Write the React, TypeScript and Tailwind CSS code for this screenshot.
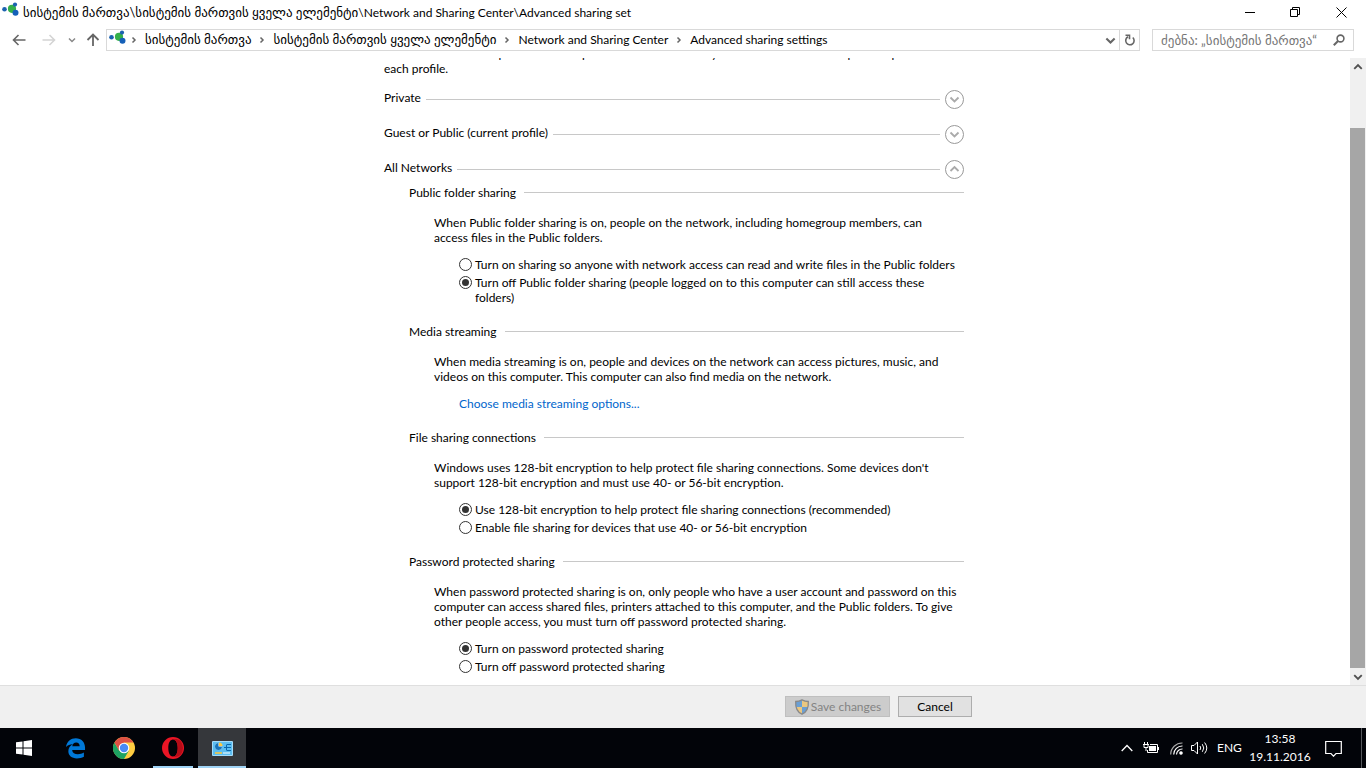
import { useState, type ReactNode } from "react";

const crumbs = [
  { label: "სისტემის მართვა", georgian: true },
  { label: "სისტემის მართვის ყველა ელემენტი", georgian: true },
  { label: "Network and Sharing Center", georgian: false },
  { label: "Advanced sharing settings", georgian: false },
];

function NetworkIcon() {
  return (
    <svg width="17" height="15" viewBox="0 0 17 15" className="shrink-0" aria-hidden="true">
      <circle cx="2.5" cy="7.3" r="2.3" fill="#1c62b0" />
      <circle cx="10" cy="6.8" r="4.1" fill="#35b04a" />
      <circle cx="13" cy="2.6" r="2.1" fill="#1c62b0" />
      <circle cx="13.5" cy="10.7" r="3" fill="#1560b8" />
    </svg>
  );
}

function Chevron({ dir, size = 8, color = "#666" }: { dir: "up" | "down" | "right"; size?: number; color?: string }) {
  const d = { up: "M1 5.5 4 2.5 7 5.5", down: "M1 2.5 4 5.5 7 2.5", right: "M2.5 1.5 5 4 2.5 6.5" }[dir];
  return (
    <svg width={size} height={size} viewBox="0 0 8 8" fill="none" stroke={color} strokeWidth="1.5" aria-hidden="true">
      <path d={d} />
    </svg>
  );
}

function TitleBar() {
  return (
    <header className="flex h-6 shrink-0 items-center pl-[2px]">
      <div className="self-start pt-[2px]">
        <NetworkIcon />
      </div>
      <h1 className="ml-1 flex-1 truncate text-[12px] leading-[15px]">
        <span className="text-[13px]">სისტემის მართვა\სისტემის მართვის ყველა ელემენტი</span>
        \Network and Sharing Center\Advanced sharing set
      </h1>
      <div className="flex h-[20px] shrink-0">
        <button aria-label="Minimize" className="flex w-12 items-center justify-center">
          <svg width="10" height="10" stroke="#000"><path d="M0 5.5h10" /></svg>
        </button>
        <button aria-label="Restore" className="flex w-[42px] items-center justify-center">
          <svg width="11" height="11" fill="none" stroke="#000">
            <path d="M.5 2.5h7v7h-7zM2.5 2.5v-2h7v7h-2" />
          </svg>
        </button>
        <button aria-label="Close" className="flex w-[50px] items-center justify-center">
          <svg width="11" height="11" stroke="#000"><path d="m.5.5 10 10M10.5.5l-10 10" /></svg>
        </button>
      </div>
    </header>
  );
}

function AddressBar() {
  return (
    <nav className="flex h-[34px] shrink-0 items-start pt-[5px] pr-3" aria-label="Address">
      <div className="flex h-[22px] w-[106px] shrink-0 items-center pl-3">
        <button aria-label="Back" className="w-[30px]">
          <svg width="14" height="12" fill="none" stroke="#666" strokeWidth="1.6"><path d="M13.5 6H1.5M6.500 1l-5 5 5 5" /></svg>
        </button>
        <button aria-label="Forward" className="w-[26px]">
          <svg width="14" height="12" fill="none" stroke="#d4d4d4" strokeWidth="1.6"><path d="M.5 6h12M7.500 1l5 5-5 5" /></svg>
        </button>
        <button aria-label="Recent locations" className="flex w-[18px]">
          <Chevron dir="down" color="#888" />
        </button>
        <button aria-label="Up">
          <svg width="14" height="14" fill="none" stroke="#666" strokeWidth="1.8"><path d="M7 13V2M1.500 7 7 1.500 12.500 7" /></svg>
        </button>
      </div>
      <div className="flex h-[22px] min-w-0 flex-1 items-center border border-[#d9d9d9]">
        <div className="ml-[2px] flex h-full w-[14px] shrink-0 items-start">
          <NetworkIcon />
        </div>
        {crumbs.map(({ label, georgian }) => (
          <span key={label} className="flex shrink-0 items-center pb-px">
            <span className="flex w-[22px] justify-center">
              <Chevron dir="right" />
            </span>
            <a href="#" className={`whitespace-nowrap leading-[15px] ${georgian ? "text-[13px]" : "text-[12px]"}`}>
              {label}
            </a>
          </span>
        ))}
        <button aria-label="Previous locations" className="ml-auto flex h-full w-[18px] items-center justify-center">
          <Chevron dir="down" size={11} />
        </button>
        <button aria-label="Refresh" className="flex h-full w-[20px] items-center justify-center border-l border-[#d9d9d9]">
          <svg width="12" height="12" fill="none" stroke="#666" strokeWidth="1.6">
            <path d="M4 2.800A4.200 4.200 0 1 0 8.800 3.500M1.500 1.200h4v4" />
          </svg>
        </button>
      </div>
      <div className="ml-3 flex h-[22px] w-[202px] shrink-0 items-center border border-[#d9d9d9] pr-2 pl-2">
        <input
          type="search"
          aria-label="ძებნა"
          placeholder="ძებნა: „სისტემის მართვა“"
          className="min-w-0 flex-1 text-[13px] leading-[15px] outline-none placeholder:text-[#767676]"
        />
        <svg width="12" height="12" fill="none" stroke="#666" strokeWidth="1.6" aria-hidden="true">
          <circle cx="7.5" cy="4.5" r="3.4" />
          <path d="M5 7 .8 11.200" strokeWidth="2" />
        </svg>
      </div>
    </nav>
  );
}

function ProfileRow({ title, open = false }: { title: string; open?: boolean }) {
  return (
    <div className="flex h-5 items-center">
      <h2 className="pb-1">{title}</h2>
      <div className="ml-[5px] h-px flex-1 bg-[#c8c8c8]" />
      <button aria-label={title} aria-expanded={open} className="ml-1 flex size-5 items-center justify-center">
        <svg width="20" height="20" fill="none" stroke="#999">
          <circle cx="10.5" cy="10.5" r="9" />
          <path d={open ? "m6.500 12 4-4 4 4" : "m6.500 8.500 4 4 4-4"} stroke="#aaa" strokeWidth="1.8" />
        </svg>
      </button>
    </div>
  );
}

function Section({ title, children }: { title: string; children: ReactNode }) {
  return (
    <section className="pl-[25px]">
      <div className="flex items-center">
        <h3>{title}</h3>
        <div className="ml-2 h-px flex-1 bg-[#c8c8c8]" />
      </div>
      <div className="pt-[15px] pl-[25px] whitespace-nowrap">{children}</div>
    </section>
  );
}

function RadioGroup({ name, options, initial }: { name: string; options: ReactNode[]; initial: number }) {
  const [selected, setSelected] = useState(initial);
  return (
    <div className="mt-3 flex flex-col gap-[3px] pl-[25px]">
      {options.map((option, i) => (
        <label key={i} className="flex items-start">
          <input
            type="radio"
            name={name}
            checked={selected === i}
            onChange={() => setSelected(i)}
            className="mt-px mr-[3px] grid size-[13px] shrink-0 appearance-none place-items-center rounded-full border border-[#333] bg-white before:size-[7px] before:rounded-full checked:before:bg-[#333]"
          />
          <span>{option}</span>
        </label>
      ))}
    </div>
  );
}

function Content() {
  return (
    <main className="min-w-0 flex-1 overflow-hidden text-[12px] leading-[15px]">
      {/* scrolled down: the first intro line is almost out of view */}
      <div className="mx-auto -mt-3 w-[582px] pr-[2px]">
        <p className="whitespace-nowrap">
          Windows creates a separate network profile for each network you use. You can choose specific options for
          <br />
          each profile.
        </p>
        <div className="mt-[13px] flex flex-col gap-[15px]">
          <ProfileRow title="Private" />
          <ProfileRow title="Guest or Public (current profile)" />
          <ProfileRow title="All Networks" open />
        </div>
        <div className="mt-[6px] flex flex-col gap-[19px]">
          <Section title="Public folder sharing">
            <p>
              When Public folder sharing is on, people on the network, including homegroup members, can
              <br />
              access files in the Public folders.
            </p>
            <RadioGroup
              name="public-folder"
              initial={1}
              options={[
                "Turn on sharing so anyone with network access can read and write files in the Public folders",
                <>
                  Turn off Public folder sharing (people logged on to this computer can still access these
                  <br />
                  folders)
                </>,
              ]}
            />
          </Section>
          <Section title="Media streaming">
            <p>
              When media streaming is on, people and devices on the network can access pictures, music, and
              <br />
              videos on this computer. This computer can also find media on the network.
            </p>
            <div className="mt-3 pl-[25px]">
              <a href="#" className="text-[#0066cc]">Choose media streaming options...</a>
            </div>
          </Section>
          <Section title="File sharing connections">
            <p>
              Windows uses 128-bit encryption to help protect file sharing connections. Some devices don't
              <br />
              support 128-bit encryption and must use 40- or 56-bit encryption.
            </p>
            <RadioGroup
              name="encryption"
              initial={0}
              options={[
                "Use 128-bit encryption to help protect file sharing connections (recommended)",
                "Enable file sharing for devices that use 40- or 56-bit encryption",
              ]}
            />
          </Section>
          <Section title="Password protected sharing">
            <p>
              When password protected sharing is on, only people who have a user account and password on this
              <br />
              computer can access shared files, printers attached to this computer, and the Public folders. To give
              <br />
              other people access, you must turn off password protected sharing.
            </p>
            <RadioGroup
              name="password"
              initial={0}
              options={["Turn on password protected sharing", "Turn off password protected sharing"]}
            />
          </Section>
        </div>
      </div>
    </main>
  );
}

function Scrollbar() {
  return (
    <div className="flex w-4 shrink-0 flex-col bg-[#f0f0f0]">
      <button aria-label="Scroll up" className="flex h-[17px] items-center justify-center">
        <Chevron dir="up" size={10} color="#505050" />
      </button>
      <div className="mt-[53px] mr-px flex-1 bg-[#a6a6a6]" />
      <button aria-label="Scroll down" className="flex h-[17px] items-center justify-center">
        <Chevron dir="down" size={10} color="#505050" />
      </button>
    </div>
  );
}

function Footer() {
  return (
    <footer className="h-[43px] shrink-0 border-t border-[#dfdfdf] bg-[#f0f0f0] pt-[10px] text-[12px] leading-[15px]">
      <div className="mx-auto flex w-[578px] justify-end gap-2">
        <button disabled className="flex h-[21px] w-[105px] items-center justify-center gap-px border border-[#bfbfbf] bg-[#cccccc] text-[#838383]">
          <svg width="16" height="16" viewBox="0 0 16 16" aria-hidden="true">
            <path d="M8 1v7H2.200C1.800 6 1.800 4 2 2.500 4 2.500 6 2 8 1z" fill="#6a9fd4" />
            <path d="M8 1v7h5.800c.4-2 .4-4 .2-5.500C12 2.500 10 2 8 1z" fill="#eac780" />
            <path d="M8 15V8H2.200C3 11.500 5 13.500 8 15z" fill="#eac780" />
            <path d="M8 15V8h5.800C13 11.500 11 13.500 8 15z" fill="#6a9fd4" />
            <path d="M8 .9C6 2 4 2.500 1.700 2.500 1.300 8.500 3 13 8 15.200c5-2.200 6.700-6.700 6.300-12.700C12 2.500 10 2 8 .9z" fill="none" stroke="#888" strokeWidth="1.3" />
          </svg>
          Save changes
        </button>
        <button className="h-[21px] w-[74px] border border-[#adadad] bg-[#e1e1e1]">Cancel</button>
      </div>
    </footer>
  );
}

function Taskbar() {
  return (
    <div className="flex h-10 shrink-0 items-stretch bg-[#020409] text-[12px] leading-[18px] text-white">
      <button aria-label="Start" className="mr-[3px] flex w-12 items-center justify-center">
        <svg width="16" height="16" fill="#fff">
          <path d="M0 2.300 6.500 1.400v6.100H0zM7.500 1.200 16 0v7.500H7.500zM0 8.500h6.500v6.100L0 13.700zM7.500 8.500H16V16l-8.500-1.200z" />
        </svg>
      </button>
      <div className="flex gap-px">
        <button aria-label="Edge" className="flex w-12 items-center justify-center">
          <svg width="21" height="22" viewBox="0 0 22 22" fill="#0078d7">
            <path d="M1 10C2 4 6 .7 11.300.7c6 0 9.700 4.300 9.700 9.800V13H7.500c.2 3 2.700 4.500 6 4.500 2.300 0 4.400-.6 6.300-1.700v4.400c-2.200 1.200-4.600 1.700-7.400 1.700C7 21.900 3.500 19 3.500 14.500c0-3.300 1.700-6 4.800-7.400C5.500 7 3 8 1 10zm6.600-.8h7.800c0-2.700-1.400-4-3.700-4-2.200 0-3.700 1.500-4.100 4z" />
          </svg>
        </button>
        <button aria-label="Chrome" className="flex w-12 items-center justify-center">
          <svg width="22" height="22" viewBox="0 0 22 22">
            <circle cx="11" cy="11" r="11" fill="#ffcd41" />
            <path d="M1.470 5.500A11 11 0 0 0 11 22l4.800-8.300H6.200z" fill="#1da362" />
            <path d="M1.470 5.500A11 11 0 0 1 20.500 5.500H11L6.200 13.700z" fill="#dd5144" />
            <circle cx="11" cy="11" r="5.3" fill="#fff" />
            <circle cx="11" cy="11" r="4.2" fill="#4a8af4" />
          </svg>
        </button>
        <button aria-label="Opera" className="flex w-12 flex-col items-center">
          <span className="flex flex-1 items-center pt-[2px]">
            <svg width="22" height="22" viewBox="0 0 22 22">
              <path fillRule="evenodd" d="M11 0a11 11 0 1 0 0 22 11 11 0 0 0 0-22zm0 2.500c2.900 0 4.700 3.500 4.700 8.500s-1.800 8.500-4.700 8.500S6.300 16 6.300 11 8.100 2.500 11 2.500z" fill="#ea1525" />
              <path d="M11 2.500c2.900 0 4.700 3.500 4.700 8.500s-1.800 8.500-4.700 8.500c2 1 5 .5 7.500-1.500a11 11 0 0 0 0-14C16 2 13 1.500 11 2.500z" fill="#b50c17" />
            </svg>
          </span>
          <span className="h-[2px] w-10 bg-[#9fd3f5]" />
        </button>
        <button aria-label="Control Panel" className="flex w-12 flex-col items-center bg-[#35373b]">
          <span className="flex flex-1 items-center pt-[2px]">
            <svg width="21" height="15" viewBox="0 0 21 15">
              <rect width="21" height="15" rx="1" fill="#a4dcfa" />
              <rect x="1" y="1" width="19" height="13" fill="#5bbdf0" />
              <circle cx="6.5" cy="5.5" r="3.5" fill="#fff" />
              <path d="M6.500 5.500V2a3.500 3.500 0 1 0 3.500 3.500z" fill="#1673b8" />
              <path d="M7 5V1.500A3.500 3.500 0 0 1 10.500 5z" fill="#ffc83d" />
              <path d="M12 6.500h2M14.500 3.500v6M15 3.500h4M15 6.500h4M15 9.500h4" stroke="#0b67ac" />
              <path d="M3 12h7" stroke="#ffc83d" strokeWidth="1.5" />
              <path d="M11 12h7" stroke="#fff" />
            </svg>
          </span>
          <span className="h-[2px] w-full bg-[#9fd3f5]" />
        </button>
      </div>
      <div className="ml-auto flex items-center">
        <button aria-label="Show hidden icons" className="flex w-[22px] justify-start">
          <svg width="12" height="8" fill="none" stroke="#fff" strokeWidth="1.3"><path d="M.7 7 6 1.500 11.300 7" /></svg>
        </button>
        <button aria-label="Battery" className="flex w-[27px]">
          <svg width="16" height="12" fill="none" stroke="#fff">
            <path d="M7 2.500h7.500v8h-10V8M15.500 5v3" />
            <path d="M6 4h7v5H6z" fill="#fff" stroke="none" />
            <path d="M1.500 0v2M4.500 0v2M0 2.500h6M1 3v2.500h4V3M3 6v3" />
          </svg>
        </button>
        <button aria-label="Wi-Fi" className="flex w-[21px]">
          <svg width="13" height="13" fill="none" stroke="#fff" strokeWidth="1.2">
            <path d="M.7 12.500A11.500 11.500 0 0 1 12.500 1" stroke="#aaa" />
            <path d="M3.700 12.500a8.500 8.500 0 0 1 8.800-8.500M6.500 12.500a5.800 5.800 0 0 1 6-5.500" />
            <circle cx="11" cy="11" r="1.2" fill="#fff" />
          </svg>
        </button>
        <button aria-label="Volume" className="flex w-[26px]">
          <svg width="17" height="14" fill="none" stroke="#fff">
            <path d="M.5 4.500H3L6.500 1v12L3 9.500H.5z" />
            <path d="M9 5q1.500 2 0 4M11.300 3.200q3 3.800 0 7.600M13.600 1.500q4.400 5.500 0 11" />
          </svg>
        </button>
        <button aria-label="Input language" className="w-[27px] text-left">ENG</button>
        <button className="w-[72px] text-center">
          13:58
          <br />
          19.11.2016
        </button>
        <button aria-label="Notifications" className="mr-[10px] flex w-[35px] justify-center">
          <svg width="17" height="17" fill="none" stroke="#fff" strokeWidth="1.2">
            <path d="M.7 1.500h15.600v12H11l-2.500 2.700L6 13.500H.7z" />
          </svg>
        </button>
        <button aria-label="Show desktop" className="h-10 w-[5px] border-l border-[#55585c]" />
      </div>
    </div>
  );
}

export default function App() {
  return (
    <div className="flex h-screen flex-col overflow-hidden bg-white font-[Lato,'DejaVu_Sans',sans-serif] text-black">
      <TitleBar />
      <AddressBar />
      <div className="flex min-h-0 flex-1">
        <Content />
        <Scrollbar />
      </div>
      <Footer />
      <Taskbar />
    </div>
  );
}
